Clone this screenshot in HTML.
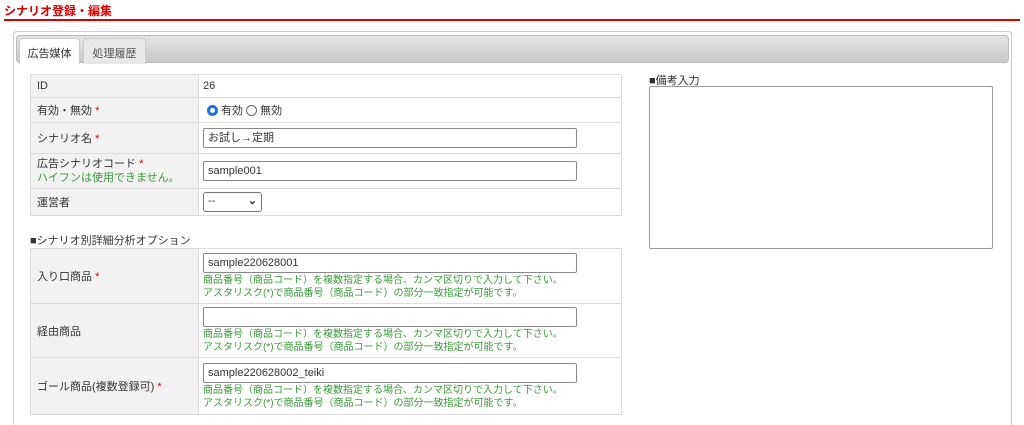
<!DOCTYPE html>
<html style="overflow:hidden;height:425px"><head><meta charset="utf-8"><style>
*{box-sizing:border-box}
body{margin:0;width:1024px;height:425px;overflow:hidden;background:#fff;font-family:"Liberation Sans","Noto Sans CJK JP",sans-serif;font-size:11px;color:#333;position:relative}
.a{position:absolute}
.title{left:4px;top:2px;color:#d00;font-weight:bold;font-size:12px}
.line{left:4px;top:19px;width:1016px;height:2px;background:#d00}
.box{left:13px;top:31px;width:999px;height:394px;border:1px solid #ccc;border-bottom:none;border-radius:4px 4px 0 0}
.bar{left:16px;top:35px;width:993px;height:28px;border-radius:4px;background:linear-gradient(#e4e4e4,#c8c8c8);border:1px solid #bbb}
.tab{top:38px;height:26px;border:1px solid #ccc;border-bottom:none;border-radius:4px 4px 0 0;padding:6px 0;text-align:center;font-size:11px;white-space:nowrap}
table{position:absolute;border-collapse:collapse;width:592px}
td{border:1px solid #ddd;padding:0 4px;vertical-align:middle}
td.l{background:#f2f2f2;width:168px;padding:0 6px}
.r{color:#d00}
.g{color:#3a9a3a}
.inp{display:block;width:374px;height:20px;border:1px solid #888;border-radius:2px;padding:2px 4px;font-size:11px;line-height:14px}
.note{line-height:13px;margin-top:1px;font-size:10px;white-space:nowrap}
</style></head><body>
<div class="a title">シナリオ登録・編集</div>
<div class="a line"></div>
<div class="a box"></div>
<div class="a bar"></div>
<div class="a tab" style="left:19px;width:61px;background:#fff;">広告媒体</div>
<div class="a tab" style="left:83px;width:63px;background:#e8e8e8;color:#555">処理履歴</div>
<table style="left:30px;top:74px">
<tr style="height:23px"><td class="l">ID</td><td>26</td></tr>
<tr style="height:25px"><td class="l">有効・無効 <span class="r">*</span></td><td><span style="display:inline-block;width:11px;height:11px;border-radius:50%;border:3px solid #1a73e8;vertical-align:-2px;margin-left:4px"></span> 有効 <span style="display:inline-block;width:11px;height:11px;border-radius:50%;border:1px solid #666;vertical-align:-2px"></span> 無効</td></tr>
<tr style="height:31px"><td class="l">シナリオ名 <span class="r">*</span></td><td><span class="inp">お試し→定期</span></td></tr>
<tr style="height:35px"><td class="l" style="line-height:14px">広告シナリオコード <span class="r">*</span><br><span class="g">ハイフンは使用できません。</span></td><td><span class="inp">sample001</span></td></tr>
<tr style="height:27px"><td class="l">運営者</td><td><span style="display:inline-block;width:59px;height:20px;border:1px solid #777;border-radius:3px;padding:2px 4px;position:relative">--<span style="position:absolute;right:4px;top:1px;font-weight:bold">⌄</span></span></td></tr>
</table>
<div class="a" style="left:30px;top:232px">■シナリオ別詳細分析オプション</div>
<table style="left:30px;top:248px">
<tr style="height:55px"><td class="l">入り口商品 <span class="r">*</span></td><td><span class="inp">sample220628001</span><div class="g note">商品番号（商品コード）を複数指定する場合、カンマ区切りで入力して下さい。<br>アスタリスク(*)で商品番号（商品コード）の部分一致指定が可能です。</div></td></tr>
<tr style="height:54px"><td class="l">経由商品</td><td><span class="inp"></span><div class="g note">商品番号（商品コード）を複数指定する場合、カンマ区切りで入力して下さい。<br>アスタリスク(*)で商品番号（商品コード）の部分一致指定が可能です。</div></td></tr>
<tr style="height:57px"><td class="l">ゴール商品(複数登録可) <span class="r">*</span></td><td><span class="inp">sample220628002_teiki</span><div class="g note">商品番号（商品コード）を複数指定する場合、カンマ区切りで入力して下さい。<br>アスタリスク(*)で商品番号（商品コード）の部分一致指定が可能です。</div></td></tr>
</table>
<div class="a" style="left:649px;top:72px">■備考入力</div>
<div class="a" style="left:649px;top:86px;width:344px;height:163px;border:1px solid #999;border-radius:2px"></div>
</body></html>
